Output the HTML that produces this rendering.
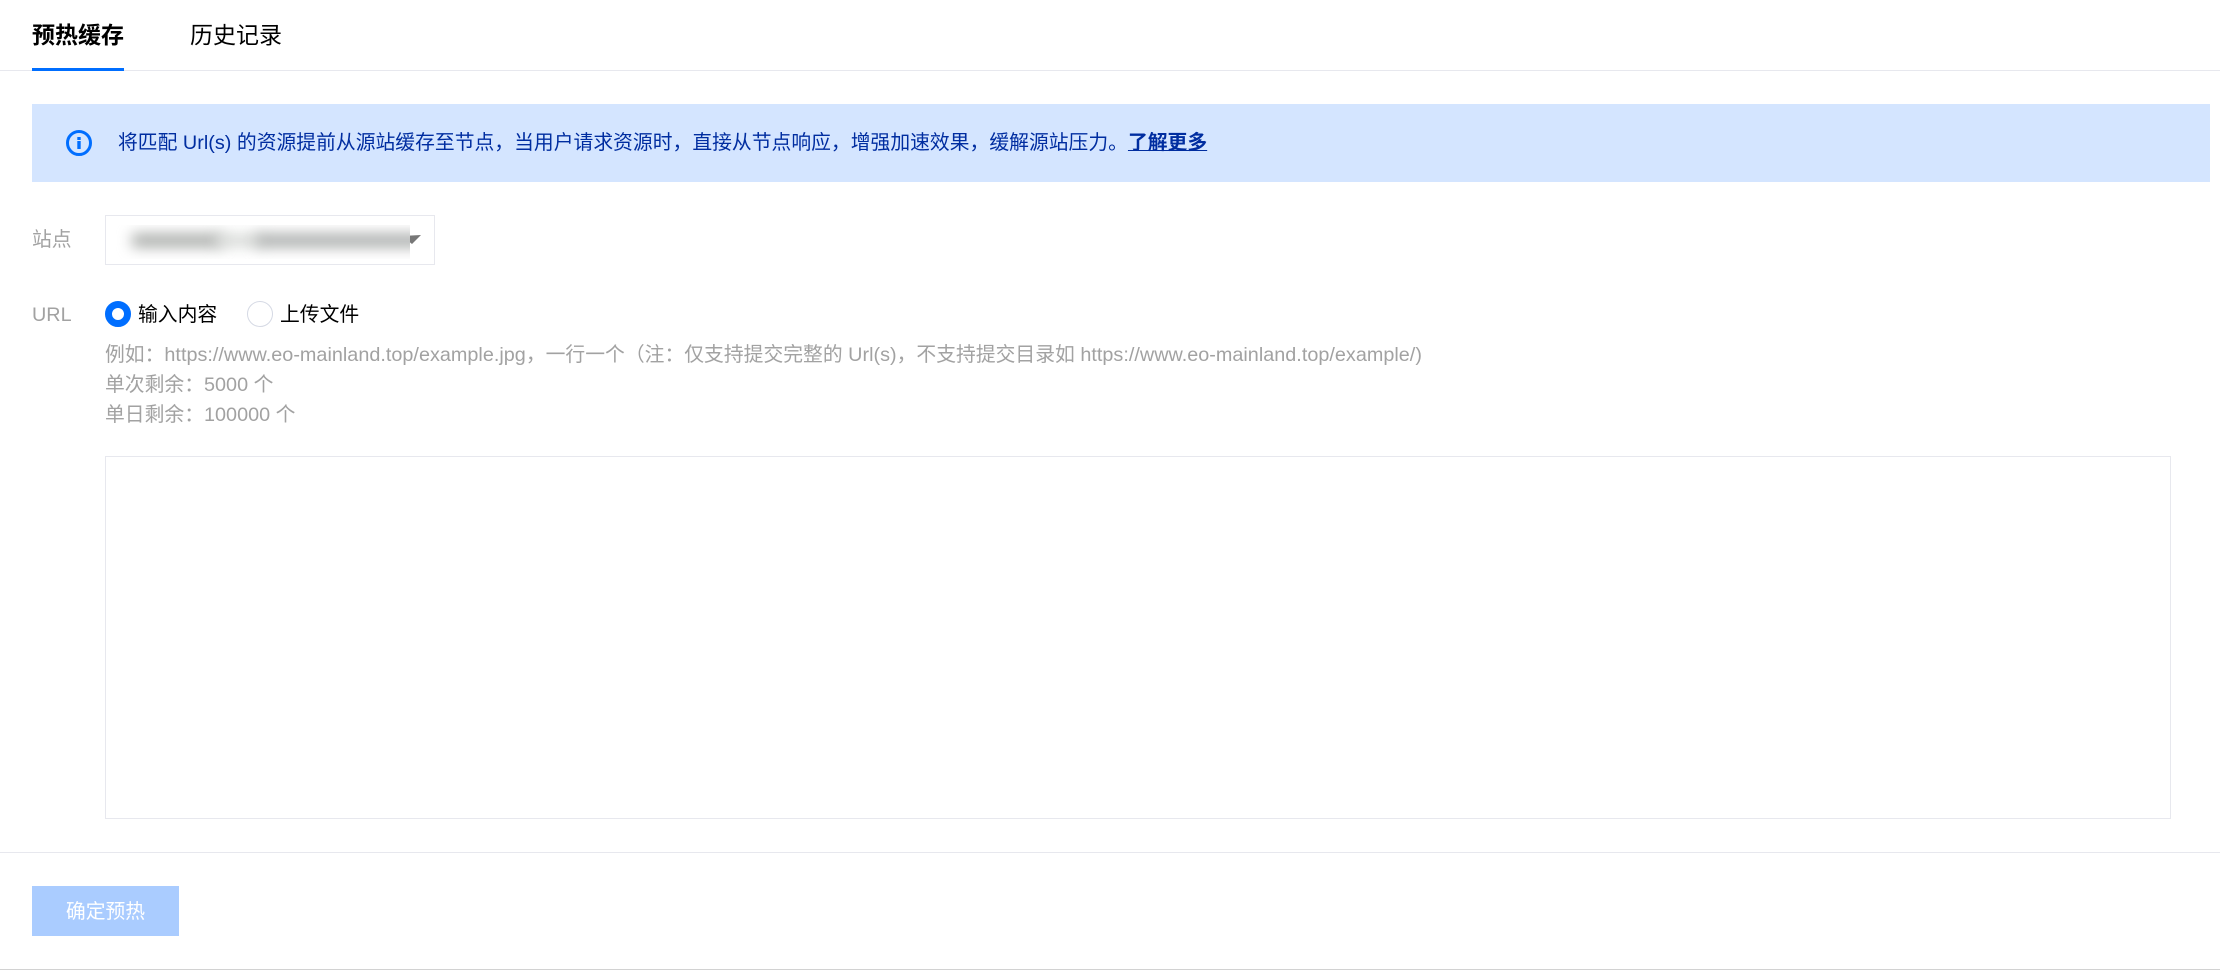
<!DOCTYPE html>
<html lang="zh-CN">
<head>
<meta charset="utf-8">
<title>预热缓存</title>
<style>
html,body{margin:0;padding:0;background:#fff;}
body{width:2220px;height:970px;position:relative;overflow:hidden;font-family:"Liberation Sans","Noto Sans CJK SC",sans-serif;font-size:19.8px;}
.a{position:absolute;white-space:nowrap;}
.line{position:absolute;left:0;width:2220px;height:1px;background:#e7e8ee;}
</style>
</head>
<body>
<div class="a" style="left:32px;top:18px;font-size:23px;line-height:34px;font-weight:700;color:#000;">预热缓存</div>
<div class="a" style="left:190px;top:18px;font-size:23px;line-height:34px;color:#000;">历史记录</div>
<div class="a" style="left:0;top:70px;width:2220px;height:1px;background:#e7e8ee;"></div>
<div class="a" style="left:32px;top:68px;width:92px;height:3px;background:#006eff;"></div>

<div class="a" style="left:32px;top:104px;width:2178px;height:78px;background:#d4e5ff;"></div>
<svg class="a" style="left:66px;top:130px;" width="26" height="26" viewBox="0 0 26 26"><circle cx="13" cy="13" r="11.5" fill="none" stroke="#006eff" stroke-width="3"/><rect x="11.3" y="7" width="3.4" height="3" fill="#006eff"/><rect x="11.3" y="11" width="3.4" height="8" fill="#006eff"/></svg>
<div class="a" style="left:118px;top:128px;line-height:30px;color:#002da0;letter-spacing:0.02px;">将匹配 Url(s) 的资源提前从源站缓存至节点，当用户请求资源时，直接从节点响应，增强加速效果，缓解源站压力。<span style="font-weight:700;text-decoration:underline;">了解更多</span></div>

<div class="a" style="left:32px;top:225px;line-height:30px;color:#a2a2a2;">站点</div>
<div class="a" style="left:105px;top:215px;width:328px;height:48px;border:1px solid #e7e8ee;"></div>
<svg class="a" style="left:402px;top:235px;" width="19" height="10" viewBox="0 0 19 10"><path d="M0 1L19 0L10 9Z" fill="#777"/></svg>
<div class="a" style="left:112px;top:225px;width:298px;height:34px;background:#fff;overflow:hidden;">
  <div class="a" style="left:20px;top:9px;width:90px;height:13px;background:#a6a9a6;filter:blur(7px);"></div>
  <div class="a" style="left:104px;top:10px;width:46px;height:11px;background:#d0d3d0;filter:blur(7px);"></div>
  <div class="a" style="left:144px;top:9px;width:180px;height:13px;background:#a6a9a8;filter:blur(7px);"></div>
</div>

<div class="a" style="left:32px;top:300px;line-height:30px;color:#a2a2a2;">URL</div>
<div class="a" style="left:105px;top:301px;width:26px;height:26px;box-sizing:border-box;border:7px solid #006eff;border-radius:50%;background:#fff;"></div>
<div class="a" style="left:138px;top:300px;line-height:30px;color:#000;">输入内容</div>
<div class="a" style="left:247px;top:301px;width:26px;height:26px;box-sizing:border-box;border:1px solid #d5d9e4;border-radius:50%;background:#fff;"></div>
<div class="a" style="left:280px;top:300px;line-height:30px;color:#000;">上传文件</div>

<div class="a" style="left:105px;top:341px;line-height:29.9px;color:#a2a2a2;letter-spacing:0.02px;">例如：https://www.eo-mainland.top/example.jpg，一行一个（注：仅支持提交完整的 Url(s)，不支持提交目录如 https://www.eo-mainland.top/example/)<br>单次剩余：5000 个<br>单日剩余：100000 个</div>

<div class="a" style="left:105px;top:456px;width:2064px;height:361px;border:1px solid #e7e8ee;"></div>
<div class="line" style="top:852px;"></div>
<div class="a" style="left:32px;top:886px;width:147px;height:50px;background:#aaccff;color:#fff;line-height:52px;text-align:center;">确定预热</div>
<div class="line" style="top:969px;background:#d2d2d2;"></div>
</body>
</html>
